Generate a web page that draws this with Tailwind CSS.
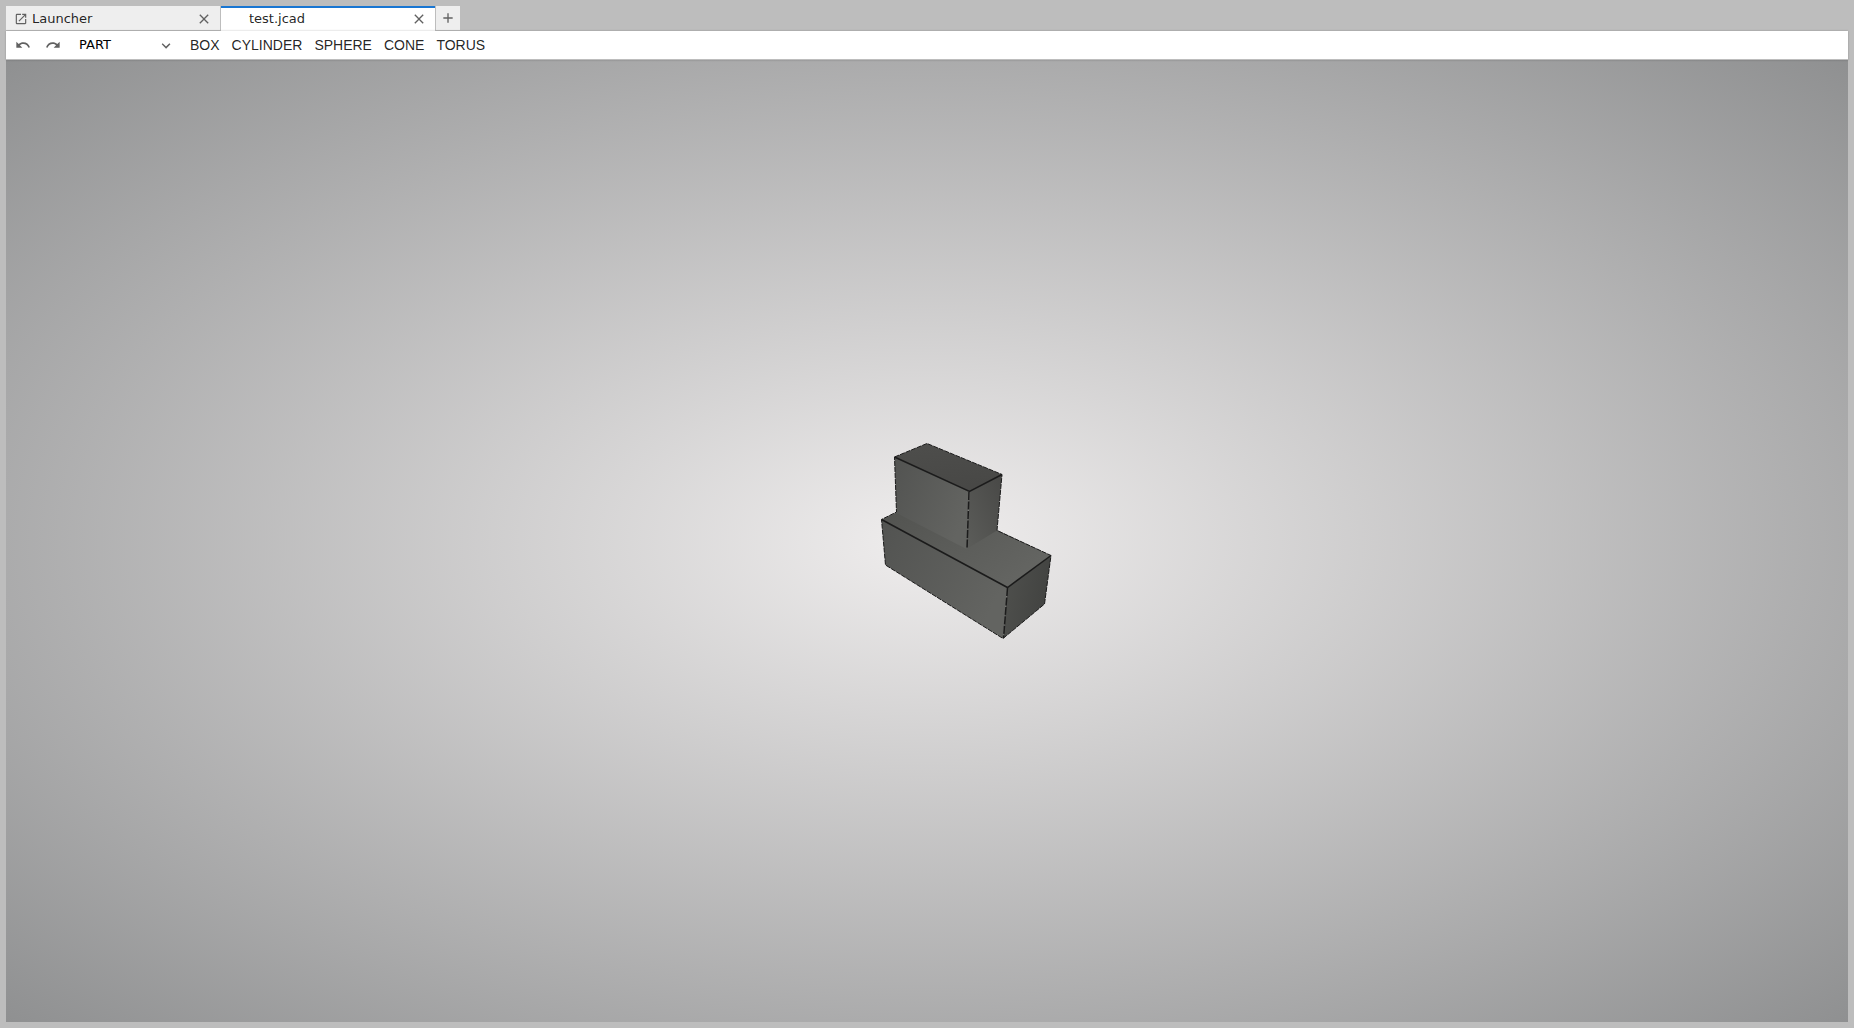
<!DOCTYPE html>
<html lang="en">
<head>
<meta charset="utf-8">
<title>test.jcad</title>
<script src="https://cdn.jsdelivr.net/npm/@tailwindcss/browser@4"></script>
</head>
<body class="h-screen overflow-hidden bg-[#bdbdbd] p-1.5 flex flex-col font-['DejaVu_Sans',sans-serif] text-[13px] text-black/87">
  <!-- Document tabs -->
  <div class="flex h-[25px] shrink-0">
    <div class="flex h-6 w-[214px] items-center bg-[#eee] pl-2 pr-2 pt-px">
      <svg class="size-[14px] shrink-0 fill-[#616161]" viewBox="0 0 24 24"><path d="M19 19H5V5h7V3H5a2 2 0 0 0-2 2v14a2 2 0 0 0 2 2h14c1.1 0 2-.9 2-2v-7h-2v7zM14 3v2h3.590l-9.830 9.830 1.410 1.410L19 6.410V10h2V3h-7z"/></svg>
      <span class="ml-1 flex-1 pt-px">Launcher</span>
      <svg class="size-4 fill-[#616161]" viewBox="0 0 24 24"><path d="M19 6.410L17.590 5 12 10.590 6.410 5 5 6.410 10.590 12 5 17.590 6.410 19 12 13.410 17.590 19 19 17.590 13.410 12z"/></svg>
    </div>
    <div class="ml-px flex w-[214px] items-center border-t-2 border-[#1976d2] bg-white pl-7 pr-2 pb-[2px]">
      <span class="flex-1">test.jcad</span>
      <svg class="mt-px size-4 fill-[#616161]" viewBox="0 0 24 24"><path d="M19 6.410L17.590 5 12 10.590 6.410 5 5 6.410 10.590 12 5 17.590 6.410 19 12 13.410 17.590 19 19 17.590 13.410 12z"/></svg>
    </div>
    <div class="ml-px flex h-6 w-6 items-center justify-center bg-[#eee]">
      <svg class="size-4 fill-[#616161]" viewBox="0 0 24 24"><path d="M19 13h-6v6h-2v-6H5v-2h6V5h2v6h6v2z"/></svg>
    </div>
  </div>
  <!-- Toolbar -->
  <div class="relative z-10 flex h-[29px] shrink-0 items-center border-b border-[#bdbdbd] bg-white shadow-[0_0_2px_rgba(0,0,0,0.24)]">
    <svg class="ml-[9px] size-4 fill-[#616161]" viewBox="0 0 24 24"><path d="M12.500 8c-2.650 0-5.050.99-6.900 2.600L2 7v9h9l-3.620-3.620c1.390-1.160 3.160-1.880 5.120-1.880 3.540 0 6.550 2.310 7.600 5.500l2.370-.78C21.080 11.030 17.150 8 12.500 8z"/></svg>
    <svg class="ml-[14px] size-4 fill-[#616161]" viewBox="0 0 24 24"><path d="M18.400 10.600C16.550 8.990 14.150 8 11.500 8c-4.650 0-8.580 3.030-9.960 7.220L3.900 16c1.050-3.190 4.050-5.500 7.600-5.500 1.950 0 3.730.72 5.120 1.880L13 16h9V7l-3.600 3.600z"/></svg>
    <div class="ml-[18px] flex w-[95px] items-center justify-between">
      <span class="text-[13px] text-black">PART</span>
      <svg class="mt-px size-4 fill-[#616161]" viewBox="0 0 18 18"><path d="M5.200 5.900L9 9.700l3.800-3.800 1.200 1.200-4.900 5-4.900-5z"/></svg>
    </div>
    <div class="ml-4 flex gap-3 font-['Liberation_Sans',sans-serif] text-sm">
      <span>BOX</span><span>CYLINDER</span><span>SPHERE</span><span>CONE</span><span>TORUS</span>
    </div>
  </div>
  <!-- 3D view -->
  <div class="flex min-h-0 flex-1 bg-[radial-gradient(#efeded,#8f9091)]">
    <svg class="size-full" viewBox="6 60 1842 962">
      <defs>
        <linearGradient id="top" x1="0" y1="0" x2="0.300" y2="1"><stop stop-color="#4e4e4c"/><stop offset="1" stop-color="#484846"/></linearGradient>
        <linearGradient id="front" x1="0" y1="0" x2="1" y2="0.500"><stop stop-color="#525351"/><stop offset="1" stop-color="#636461"/></linearGradient>
        <linearGradient id="side" x1="0" y1="1" x2="1" y2="0"><stop stop-color="#5c5d5a"/><stop offset="1" stop-color="#484846"/></linearGradient>
        <linearGradient id="ledge" x1="0" y1="0" x2="1" y2="0.600"><stop stop-color="#525350"/><stop offset="1" stop-color="#646562"/></linearGradient>
        <linearGradient id="end" x1="0" y1="0" x2="1" y2="0.300"><stop stop-color="#50514e"/><stop offset="1" stop-color="#424341"/></linearGradient>
      </defs>
      <path fill="url(#ledge)" d="M881.500 519.500L897 512L997 530L1051 555.500L1007.500 587.500Z"/>
      <path fill="url(#front)" d="M881.500 519.500L1007.500 587.500L1003 638.500L885.500 565Z"/>
      <path fill="url(#end)" d="M1007.500 587.500L1051 555.500L1044.500 604L1003 638.500Z"/>
      <path fill="url(#front)" d="M894.500 457L969.500 491.500L966.500 549L896.500 513Z"/>
      <path fill="url(#side)" d="M969.500 491.500L1002 474.500L997 530.500L966.500 549Z"/>
      <path fill="url(#top)" d="M894.500 457L927 443.500L1002 474.500L969.500 491.500Z"/>
      <g fill="none" stroke="#1b1b1b">
        <path stroke-width="1.500" d="M894.500 457L969.500 491.500L1002 474.500M881.500 519.500L1007.500 587.500L1051 555.500"/>
        <path stroke-width="1" stroke-dasharray="5 1" d="M894.500 457L927 443.500L1002 474.500L997 530.500L1051 555.500L1044.500 604L1003 638.500L885.500 565L881.500 519.500L896.500 512L894.500 457"/>
        <path stroke-width="1.500" stroke-dasharray="8 1.500" d="M969 492L967 549M1007.500 588L1003.500 638"/>
      </g>
    </svg>
  </div>
</body>
</html>
